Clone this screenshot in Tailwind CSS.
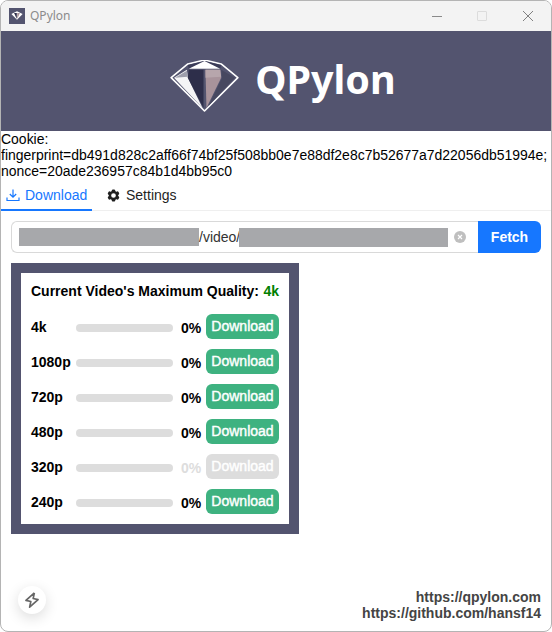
<!DOCTYPE html>
<html lang="en">
  <head>
    <meta charset="UTF-8" />
    <script src="https://cdn.jsdelivr.net/npm/@tailwindcss/browser@4"></script>
    <title>QPylon</title>
  </head>
  <body class="bg-white font-['Liberation_Sans',Arial,sans-serif]">
    <div class="relative flex h-[632px] w-[552px] flex-col overflow-hidden rounded-lg border border-[#b4b4b4] bg-white text-black">
      <!-- title bar -->
      <div class="flex h-[30px] shrink-0 items-center bg-[#f3f3f3] pl-2">
        <div class="flex size-4 items-center justify-center bg-[#53546f]">
          <svg viewBox="0 0 70 53" class="w-3">
            <polygon points="35,2 68,18 35,51 2,18" fill="#fff" />
            <polygon points="18,12 34,12 34,46" fill="#2d2e4a" />
            <polygon points="36,12 52,12 36,46" fill="#a8939b" />
          </svg>
        </div>
        <span class="ml-[5px] font-['Noto_Sans',sans-serif] text-xs text-[#8b8b8b]">QPylon</span>
        <div class="ml-auto flex items-center pr-[18px]">
          <div class="h-px w-[10px] bg-[#8a8a8a]"></div>
          <div class="ml-[35px] size-[10px] rounded-[1px] border border-[#dcdcdc]"></div>
          <svg viewBox="0 0 10 10" class="ml-9 size-[10px]" fill="none" stroke="#808080" stroke-width="1">
            <path d="M0 0L10 10M10 0L0 10" />
          </svg>
        </div>
      </div>

      <!-- banner -->
      <div class="flex h-[100px] shrink-0 items-center justify-center bg-[#53546f] pl-[14px]">
        <svg viewBox="0 0 70 53" class="mt-[10px] h-[52px] w-[69px]">
          <polygon points="1,18 18,4 35,0 52,4 69,18 35,52" fill="#53546f" stroke="#fff" stroke-width="1.6" stroke-linejoin="round" />
          <polygon points="18,5 35,1 52,5 51,9 19,9" fill="#3b3c58" />
          <polygon points="35,1 51,9 19,9" fill="#fff" />
          <polygon points="4,18 17,10 18,18 33,49" fill="#f4f4f6" />
          <polygon points="5,18 17,11 18,17" fill="#9d9eac" />
          <polygon points="19,10 34,10 34,49 18,18" fill="#2d2e4a" />
          <polygon points="36,10 51,10 52,18 37,49" fill="#a8939b" />
          <polygon points="36,10 51,10 52,17 36,18" fill="#b7a6ac" />
          <polygon points="52,10 66,18 39,47 53,18" fill="#474860" />
        </svg>
        <span class="mb-[2px] ml-[16px] font-['Noto_Sans',sans-serif] text-[39.5px] leading-none font-bold text-white">QPylon</span>
      </div>

      <!-- cookie -->
      <div class="text-[13.98px] leading-4 whitespace-nowrap">
        <p>Cookie:</p>
        <p>fingerprint=db491d828c2aff66f74bf25f508bb0e7e88df2e8c7b52677a7d22056db51994e;</p>
        <p>nonce=20ade236957c84b1d4bb95c0</p>
      </div>

      <!-- tabs -->
      <div class="mt-[3px] flex h-[29px] shrink-0 border-b border-[#efefef] text-sm">
        <div class="relative flex w-[91px] items-center pb-[2px] pl-[5px] text-[#1677ff]">
          <svg viewBox="0 0 14 14" class="mr-[5px] size-[14px]" fill="none" stroke="currentColor" stroke-width="1.2">
            <path d="M7 1.5V9M3.8 6L7 9.2L10.2 6M1 9.5V12.5H13V9.5" />
          </svg>
          Download
          <div class="absolute right-0 -bottom-px left-0 h-[2px] bg-[#1677ff]"></div>
        </div>
        <div class="ml-[14px] flex items-center pb-[2px] text-[#1f1f1f]">
          <svg viewBox="0 0 24 24" class="mr-[5px] size-[15px]" fill="#1f1f1f">
            <path fill-rule="evenodd" d="M11.078 2.25c-.917 0-1.699.663-1.85 1.567L9.05 4.889c-.02.12-.115.26-.297.348a7.493 7.493 0 0 0-.986.57c-.166.115-.334.126-.45.083L6.3 5.508a1.875 1.875 0 0 0-2.282.819l-.922 1.597a1.875 1.875 0 0 0 .432 2.385l.84.692c.095.078.17.229.154.43a7.598 7.598 0 0 0 0 1.139c.015.2-.059.352-.153.43l-.841.692a1.875 1.875 0 0 0-.432 2.385l.922 1.597a1.875 1.875 0 0 0 2.282.818l1.019-.382c.115-.043.283-.031.45.082.312.214.641.405.985.57.182.088.277.228.297.35l.178 1.071c.151.904.933 1.567 1.85 1.567h1.844c.916 0 1.699-.663 1.85-1.567l.178-1.072c.02-.12.114-.26.297-.349.344-.165.673-.356.985-.57.167-.114.335-.125.45-.082l1.02.382a1.875 1.875 0 0 0 2.28-.819l.923-1.597a1.875 1.875 0 0 0-.432-2.385l-.84-.692c-.095-.078-.17-.229-.154-.43a7.614 7.614 0 0 0 0-1.139c-.016-.2.059-.352.153-.43l.84-.692c.708-.582.891-1.59.433-2.385l-.922-1.597a1.875 1.875 0 0 0-2.282-.818l-1.02.382c-.114.043-.282.031-.449-.083a7.49 7.49 0 0 0-.985-.57c-.183-.087-.277-.227-.297-.348l-.179-1.072a1.875 1.875 0 0 0-1.85-1.567h-1.843ZM12 15.75a3.75 3.75 0 1 0 0-7.5 3.75 3.75 0 0 0 0 7.5Z" />
          </svg>
          Settings
        </div>
      </div>

      <!-- url input -->
      <div class="mx-[10px] mt-[10px] flex h-8 shrink-0">
        <div class="flex min-w-0 flex-1 items-center rounded-l-md border border-r-0 border-[#d9d9d9] pl-[7px] text-sm text-[#333]">
          <div class="h-[18px] w-[180px] bg-[#a7a8ab]"></div>
          <span class="w-[40px] whitespace-nowrap">/video/</span>
          <div class="h-[19px] w-[209px] bg-[#a7a8ab]"></div>
          <div class="ml-[6px] flex size-3 items-center justify-center rounded-full bg-[#bfbfbf]">
            <svg viewBox="0 0 6 6" class="size-[6px]" fill="none" stroke="#fff" stroke-width="1.1">
              <path d="M1 1L5 5M5 1L1 5" />
            </svg>
          </div>
        </div>
        <button class="w-[63px] rounded-r-md bg-[#1677ff] text-sm font-bold text-white">Fetch</button>
      </div>

      <!-- quality card -->
      <div class="mt-[10px] ml-[10px] h-[271px] w-[288px] shrink-0 border-[10px] border-[#53546f] px-[10px] text-sm font-bold">
        <div class="flex h-9 items-center justify-between">
          <span>Current Video's Maximum Quality:</span>
          <span class="text-[#008000]">4k</span>
        </div>
        <div class="flex h-[35px] items-center">
          <span class="w-[45px] pt-px">4k</span>
          <div class="mt-[3px] h-2 w-[97px] rounded-full bg-[#dddddd]"></div>
          <span class="ml-2 w-[25px] pt-[3px]">0%</span>
          <button class="h-[25px] w-[73px] rounded-md bg-[#3eb280] pb-[2px] font-normal text-white [-webkit-text-stroke:0.4px_white]">Download</button>
        </div>
        <div class="flex h-[35px] items-center">
          <span class="w-[45px] pt-px">1080p</span>
          <div class="mt-[3px] h-2 w-[97px] rounded-full bg-[#dddddd]"></div>
          <span class="ml-2 w-[25px] pt-[3px]">0%</span>
          <button class="h-[25px] w-[73px] rounded-md bg-[#3eb280] pb-[2px] font-normal text-white [-webkit-text-stroke:0.4px_white]">Download</button>
        </div>
        <div class="flex h-[35px] items-center">
          <span class="w-[45px] pt-px">720p</span>
          <div class="mt-[3px] h-2 w-[97px] rounded-full bg-[#dddddd]"></div>
          <span class="ml-2 w-[25px] pt-[3px]">0%</span>
          <button class="h-[25px] w-[73px] rounded-md bg-[#3eb280] pb-[2px] font-normal text-white [-webkit-text-stroke:0.4px_white]">Download</button>
        </div>
        <div class="flex h-[35px] items-center">
          <span class="w-[45px] pt-px">480p</span>
          <div class="mt-[3px] h-2 w-[97px] rounded-full bg-[#dddddd]"></div>
          <span class="ml-2 w-[25px] pt-[3px]">0%</span>
          <button class="h-[25px] w-[73px] rounded-md bg-[#3eb280] pb-[2px] font-normal text-white [-webkit-text-stroke:0.4px_white]">Download</button>
        </div>
        <div class="flex h-[35px] items-center">
          <span class="w-[45px] pt-px">320p</span>
          <div class="mt-[3px] h-2 w-[97px] rounded-full bg-[#dddddd]"></div>
          <span class="ml-2 w-[25px] pt-[3px] text-[#dddddd]">0%</span>
          <button class="h-[25px] w-[73px] rounded-md bg-[#dddddd] pb-[2px] font-normal text-white [-webkit-text-stroke:0.4px_white]">Download</button>
        </div>
        <div class="flex h-[35px] items-center">
          <span class="w-[45px] pt-px">240p</span>
          <div class="mt-[3px] h-2 w-[97px] rounded-full bg-[#dddddd]"></div>
          <span class="ml-2 w-[25px] pt-[3px]">0%</span>
          <button class="h-[25px] w-[73px] rounded-md bg-[#3eb280] pb-[2px] font-normal text-white [-webkit-text-stroke:0.4px_white]">Download</button>
        </div>
      </div>

      <!-- footer links -->
      <div class="mt-auto pr-[10px] pb-[10px] text-right text-sm leading-4 font-bold text-[#444]">
        <p>https://qpylon.com</p>
        <p>https://github.com/hansf14</p>
      </div>

      <!-- float button -->
      <button class="absolute bottom-[17px] left-[17px] flex size-7 items-center justify-center rounded-full bg-white shadow-[0_4px_14px_rgba(0,0,0,0.14)]">
        <svg viewBox="0 0 24 24" class="size-5" fill="none" stroke="#666" stroke-width="2" stroke-linejoin="round">
          <path d="M13 3v7h6l-8 11v-7H5l8-11" transform="rotate(12 12 12)" />
        </svg>
      </button>
    </div>
  </body>
</html>
